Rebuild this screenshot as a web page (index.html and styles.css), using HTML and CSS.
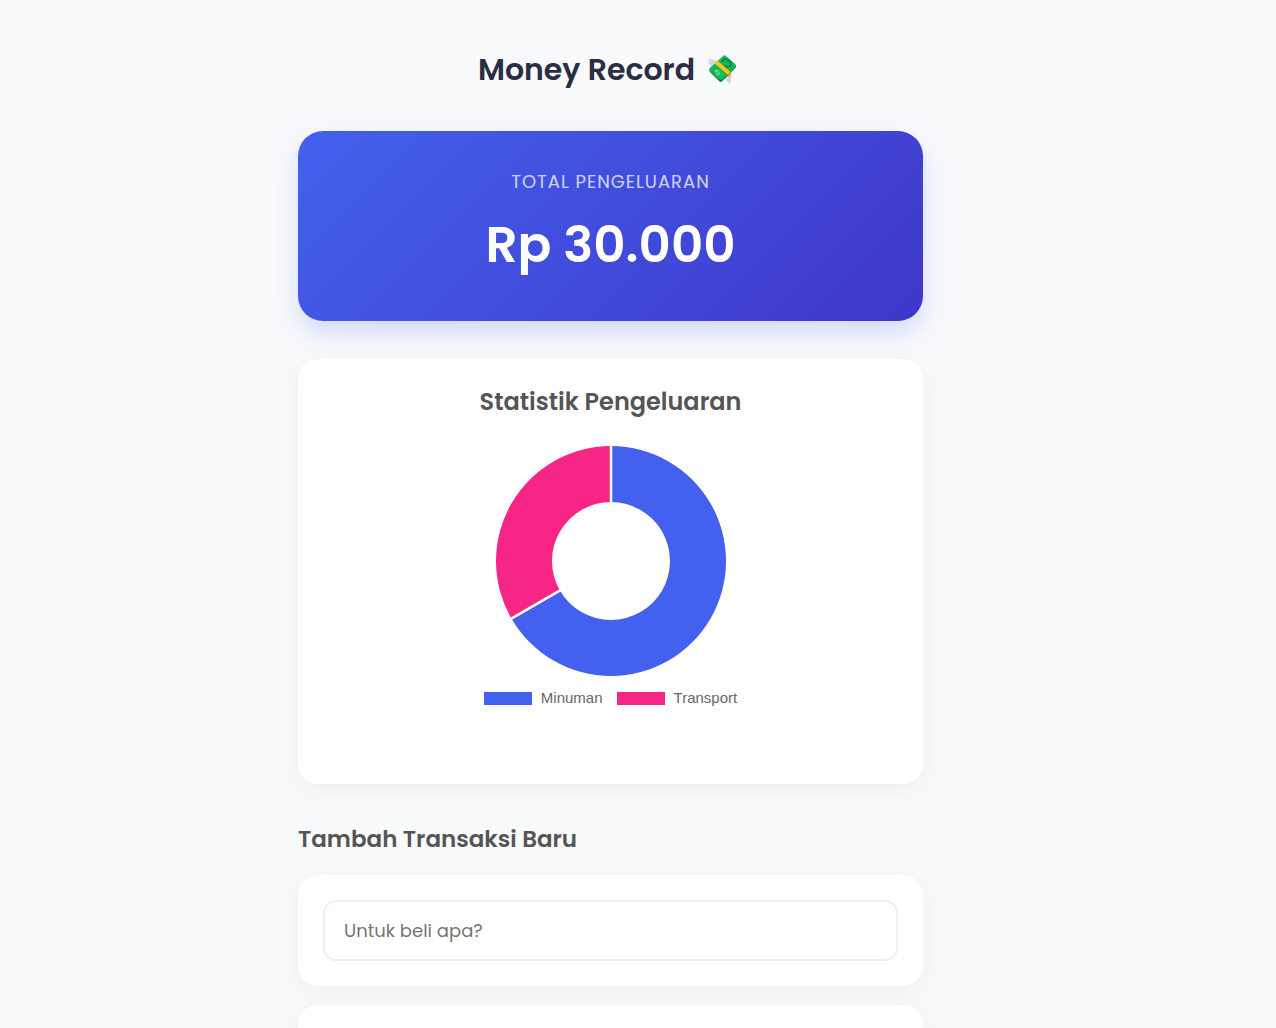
FILE: index.html
```
<!DOCTYPE html>
<html lang="id">
  <head>
    <meta charset="UTF-8" />
    <meta name="viewport" content="width=device-width, initial-scale=1.0" />
    <title>Money Record</title>
    <link rel="stylesheet" href="styles.css" />
  </head>
  <body>
    <main class="container">
      <h1 class="title">
        Money Record
        <svg class="title-icon" viewBox="0 0 38 34" aria-hidden="true">
          <path d="M1 5c4 0 8 2 12 4l-6 8c-1-2-2-2-4-3l1-2c-2-1-3-2-2-4L1 5z" fill="#d5d8df" />
          <path d="M25 16l-9 7 7 8c1 1 2 1 2-1l1-5c0-3-1-6-1-9z" fill="#d5d8df" />
          <path d="M3 16L17 3c1-1 2-1 3 0l10 9c1 1 1 2 0 3L16 29c-1 1-2 1-3 0L3 19c-1-1-1-2 0-3z" fill="#087c3b" />
          <path d="M3 15L17 2c1-1 2-1 3 0l10 9c1 1 1 2 0 3L16 27c-1 1-2 1-3 0L3 18c-1-1-1-2 0-3z" fill="#16b65a" />
          <path d="M16 9c0-3 3-5 6-3s4 5 2 7c-2 1-4 1-6-1" fill="none" stroke="#078b43" stroke-width="2" />
          <path d="M8 10l3-3 14 12-3 3z" fill="#fcc21b" />
          <path d="M22 22l3-3v3l-3 3z" fill="#e59600" />
          <path d="M12 18c-2-2-4 0-3 1s3-1 4 1-2 3-4 1" fill="none" stroke="#a4efbd" stroke-width="1" />
        </svg>
      </h1>

      <section class="total-card">
        <p class="total-label">TOTAL PENGELUARAN</p>
        <p class="total-amount">Rp 30.000</p>
      </section>

      <section class="card chart-card">
        <h2 class="subtitle">Statistik Pengeluaran</h2>
        <svg class="chart" viewBox="0 0 232 232" role="img" aria-label="Minuman dan Transport">
          <path d="M116 1A115 115 0 1 1 16.4 173.5L64.9 145.5A59 59 0 1 0 116 57Z" fill="#4361ee" />
          <path d="M116 1A115 115 0 0 0 16.4 173.5L64.9 145.5A59 59 0 0 1 116 57Z" fill="#f72585" />
          <path d="M116 0V59M15 174.3L66 144.9" stroke="#fff" stroke-width="2.5" />
        </svg>
        <ul class="legend">
          <li><span class="swatch swatch-blue"></span>Minuman</li>
          <li><span class="swatch swatch-pink"></span>Transport</li>
        </ul>
      </section>

      <h2 class="subtitle form-title">Tambah Transaksi Baru</h2>
      <form class="form">
        <div class="card form-card">
          <input type="text" class="text-input" name="nama" placeholder="Untuk beli apa?" aria-label="Untuk beli apa?" />
        </div>
        <div class="card form-card"></div>
      </form>
    </main>
  </body>
</html>
```
FILE: styles.css
```
* {
  box-sizing: border-box;
}

body {
  margin: 0;
  padding: 51px 55px 40px 0;
  background-color: #f8fafc;
  color: #2b2d42;
  font-family: "Poppins", "Inter", sans-serif;
}

h1,
h2,
p,
ul {
  margin: 0;
  padding: 0;
}

.container {
  width: 100%;
  max-width: 625px;
  margin: 0 auto;
}

.title {
  display: flex;
  justify-content: center;
  align-items: center;
  gap: 12px;
  margin-bottom: 42px;
  font-size: 30px;
  font-weight: 600;
  line-height: 38px;
}

.title-icon {
  width: 36px;
  height: 32px;
}

.total-card {
  margin-bottom: 38px;
  padding: 37px 24px 41px;
  border-radius: 25px;
  background: linear-gradient(135deg, #4361ee, #3f37c9);
  box-shadow: 0 12px 25px rgba(67, 97, 238, 0.2);
  color: #fff;
  text-align: center;
}

.total-label {
  margin-bottom: 15px;
  font-size: 18px;
  line-height: 27px;
  letter-spacing: 1px;
  opacity: 0.75;
}

.total-amount {
  font-size: 50px;
  font-weight: 600;
  line-height: 70px;
}

.card {
  padding: 25px;
  border-radius: 20px;
  background-color: #fff;
  box-shadow: 0 5px 25px rgba(0, 0, 0, 0.05);
}

.chart-card {
  display: flex;
  flex-direction: column;
  align-items: center;
  padding-bottom: 76px;
}

.subtitle {
  color: #555;
  font-size: 24px;
  font-weight: 600;
  line-height: 36px;
}

.chart {
  width: 232px;
  height: 232px;
  margin: 25px 0 11px;
}

.legend {
  display: flex;
  gap: 14px;
  color: #666;
  font-family: "Liberation Sans", Arial, sans-serif;
  font-size: 15px;
  line-height: 20px;
  list-style: none;
}

.legend li {
  display: flex;
  align-items: center;
  gap: 9px;
}

.swatch {
  width: 48px;
  height: 13px;
}

.swatch-blue {
  background-color: #4361ee;
}

.swatch-pink {
  background-color: #f72585;
}

.form-title {
  margin: 37px 0 18px;
  font-size: 23px;
}

.form {
  display: grid;
  gap: 19px;
}

.form-card {
  min-height: 111px;
}

.text-input {
  display: block;
  width: 100%;
  height: 61px;
  padding: 0 19px;
  border: 2px solid #edf0f2;
  border-radius: 13px;
  background-color: #fff;
  color: #2b2d42;
  font-family: inherit;
  font-size: 18px;
}

.text-input::placeholder {
  color: #757575;
}
```
